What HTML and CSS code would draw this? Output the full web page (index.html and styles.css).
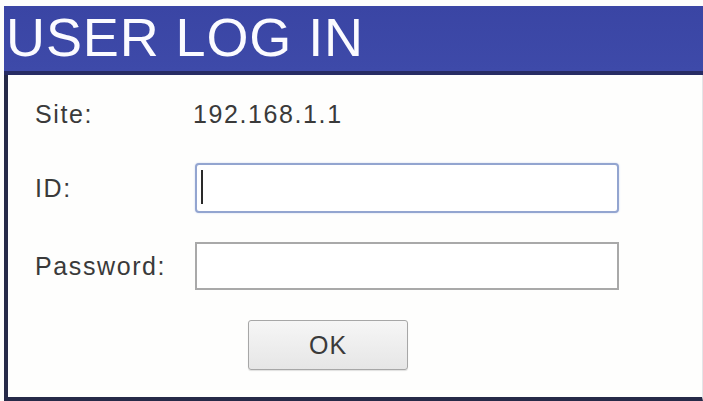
FILE: index.html
```html
<!DOCTYPE html>
<html lang="en">
<head>
<meta charset="utf-8">
<title>User Log In</title>
<link rel="stylesheet" href="styles.css">
</head>
<body>
  <div class="login">
    <h1 class="login-title">USER LOG IN</h1>
    <form class="login-body" onsubmit="return false">
      <div class="row row-site">
        <span class="label">Site:</span>
        <span class="value">192.168.1.1</span>
      </div>
      <div class="row row-id">
        <label class="label" for="uid">ID:</label>
        <div class="field field-focus"><span class="caret"></span><input id="uid" type="text"></div>
      </div>
      <div class="row row-pw">
        <label class="label" for="pw">Password:</label>
        <div class="field"><input id="pw" type="password"></div>
      </div>
      <div class="row row-btn">
        <span class="label"></span>
        <button class="btn" type="submit">OK</button>
      </div>
    </form>
  </div>
</body>
</html>
```

FILE: styles.css
```css
html, body {
  margin: 0;
  padding: 0;
  background: #fdfdfc;
}

body {
  font-family: "Liberation Sans", Arial, sans-serif;
  color: #333;
}

.login {
  margin: 6px 0 0 4px;
  width: 699px;
  height: 395px;
  display: flex;
  flex-direction: column;
}

.login-title {
  margin: 0;
  height: 69px;
  box-sizing: border-box;
  padding: 0 0 0 2px;
  background: linear-gradient(#3a45a4, #3e4aa9);
  border-bottom: 4px solid #272c64;
  color: #fbfbff;
  font-weight: normal;
  font-size: 54px;
  line-height: 63px;
  letter-spacing: 0.9px;
}

.login-body {
  flex: 1;
  margin: 0;
  border-left: 4px solid #262a48;
  border-bottom: 4px solid #262a48;
  border-right: 1px solid #e4e5e8;
  background: #fefefd;
  display: flex;
  flex-direction: column;
  padding: 14px 0 0 27px;
}

.row {
  display: flex;
  align-items: center;
  font-size: 25px;
  letter-spacing: 1.6px;
  color: #3a3a3a;
}

.label {
  width: 158px;
  flex: none;
}

.row-site {
  height: 50px;
}

.row-id {
  height: 50px;
  margin-top: 24px;
}

.row-pw {
  height: 48px;
  margin-top: 29px;
}

.row-btn {
  height: 50px;
  margin-top: 30px;
}

.field {
  position: relative;
  margin-left: 2px;
  width: 424px;
  height: 100%;
  box-sizing: border-box;
  border: 2px solid #a9a9a9;
  background: #fff;
}

.field-focus {
  border-color: #93a5d0;
  border-radius: 4px;
  box-shadow: 0 0 2px #c9d4ee;
}

.field input {
  width: 100%;
  height: 100%;
  box-sizing: border-box;
  border: 0;
  outline: none;
  background: transparent;
  padding: 0 8px;
  font: inherit;
}

/* text cursor shown in the focused field */
.caret {
  position: absolute;
  left: 4px;
  top: 5px;
  width: 2px;
  height: 34px;
  background: #2a2a2a;
}

.btn {
  margin-left: 55px;
  width: 160px;
  height: 50px;
  border: 1px solid #a7a7a7;
  border-radius: 3px;
  background: linear-gradient(#f6f6f6, #e6e6e6);
  box-shadow: 0 1px 1px rgba(0, 0, 0, 0.12);
  font-family: "Liberation Sans", Arial, sans-serif;
  font-size: 25px;
  letter-spacing: 1px;
  color: #3a3a3a;
  padding: 0;
}
```
